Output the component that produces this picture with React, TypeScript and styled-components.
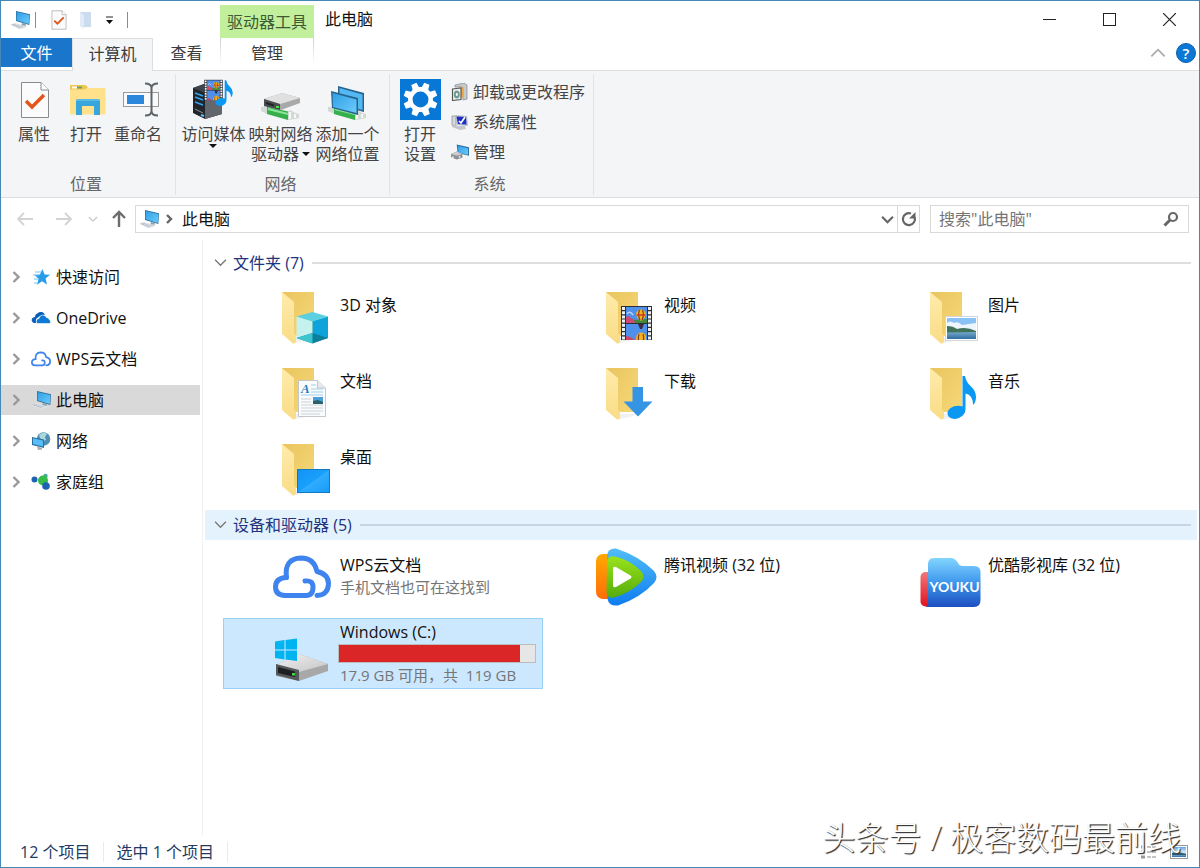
import React from 'react';
import styled, { createGlobalStyle } from 'styled-components';

const GlobalStyle = createGlobalStyle`
  *, *::before, *::after { box-sizing: border-box; }
  body {
    margin: 0;
    background: #fff;
    color: #111;
    font: 16px/20px "Open Sans", "Noto Sans CJK SC", sans-serif;
  }
  button, input { font: inherit; color: inherit; }
  button { border: 0; padding: 0; background: none; white-space: nowrap; }
  svg { display: block; flex: none; }
  h2, ul { margin: 0; padding: 0; font-weight: 400; font-size: 16px; list-style: none; }
`;

/* ---------- layout ---------- */

const Window = styled.div`
  position: relative;
  min-height: 100vh;
  display: flex;
  flex-direction: column;
  border: 1px solid #4488b8;
  background: #fff;
`;

const TitleBar = styled.header`
  display: flex;
  height: 37px;
`;

const QuickAccess = styled.div`
  width: 219px;
  padding: 0 0 0 9px;
  display: flex;
  align-items: center;
`;

const QuickButton = styled.button<{ $gap: number }>`
  margin-left: ${(p) => p.$gap}px;
`;

const QuickRule = styled.span<{ $gap: number }>`
  width: 1px;
  height: 16px;
  margin-left: ${(p) => p.$gap}px;
  background: #8c8c8c;
`;

const ContextTitle = styled.div`
  width: 94px;
  margin-top: 4px;
  padding-top: 7px;
  text-align: center;
  white-space: nowrap;
  background: #c2ef9b;
  color: #3d5a35;
`;

const WindowTitle = styled.div`
  flex: 1;
  padding: 8px 11px;
`;

const WindowButton = styled.button`
  width: 60px;
  display: grid;
  place-items: center;
`;

const TabRow = styled.nav`
  display: flex;
  height: 33px;
  border-bottom: 1px solid #dcdee0;
`;

const FileTab = styled.button`
  width: 71px;
  height: 29px;
  background: #1976ca;
  color: #fff;
`;

const Tab = styled.button<{ $width: number; $active?: boolean; $context?: boolean }>`
  width: ${(p) => p.$width}px;
  height: ${(p) => (p.$active ? 33 : 32)}px;
  padding-bottom: 2px;
  color: #3c3c3c;
  ${(p) => p.$active && `
    background: #f4f5f7;
    border: 1px solid #dcdee0;
    border-bottom: 0;
  `}
  ${(p) => p.$context && `
    background:
      linear-gradient(#ccc, #fff 26px) left / 1px 100% no-repeat,
      linear-gradient(#ccc, #fff 26px) right / 1px 100% no-repeat;
  `}
`;

const TabTools = styled.div`
  flex: 1;
  display: flex;
  justify-content: flex-end;
  align-items: center;
  gap: 10px;
  padding: 0 3px 2px 0;
`;

const HelpButton = styled.button`
  width: 20px;
  height: 20px;
  border-radius: 50%;
  border: 1px solid #0a5fae;
  background: #0a78d4;
  color: #fff;
  font-weight: 600;
  font-size: 15px;
  line-height: 16px;
`;

const Ribbon = styled.section`
  display: flex;
  padding: 3px 0 2px;
  background: #f4f5f7;
  border-bottom: 1px solid #dcdee0;
`;

const RibbonGroup = styled.div<{ $width: number; $pad: number }>`
  width: ${(p) => p.$width}px;
  padding: 5px 0 0 ${(p) => p.$pad}px;
  display: flex;
  flex-direction: column;
  border-right: 1px solid #e1e3e5;
`;

const RibbonItems = styled.div`
  display: flex;
  height: 95px;
`;

const GroupCaption = styled.div<{ $pad: number }>`
  margin: 0 4px 0 -${(p) => p.$pad}px;
  height: 21px;
  text-align: center;
  color: #666;
`;

const BigButton = styled.button<{ $width: number }>`
  width: ${(p) => p.$width}px;
  display: flex;
  flex-direction: column;
  align-items: center;
  gap: 3px;
  color: #444;
`;

const BigLabel = styled.span`
  display: block;
  text-align: center;
`;

const Caret = styled.i<{ $below?: boolean }>`
  display: ${(p) => (p.$below ? 'block' : 'inline-block')};
  width: 8px;
  margin: ${(p) => (p.$below ? '0 auto' : '0 0 4px 3px')};
  border: 4px solid transparent;
  border-top-color: #111;
  border-bottom: 0;
`;

const SmallList = styled.div`
  display: flex;
  flex-direction: column;
  margin: -2px 0 0 5px;
`;

const SmallButton = styled.button`
  height: 30px;
  display: flex;
  align-items: center;
  gap: 4px;
  color: #444;
`;

const AddressRow = styled.div`
  display: flex;
  align-items: center;
  height: 42px;
  padding: 0 10px 0 15px;
`;

const NavButton = styled.button<{ $width: number }>`
  width: ${(p) => p.$width}px;
  display: grid;
  justify-items: start;
`;

const AddressBox = styled.div`
  flex: 1;
  height: 28px;
  display: flex;
  align-items: center;
  border: 1px solid #d9d9d9;
  padding-left: 3px;
`;

const Crumb = styled.button`
  margin-left: 9px;
  flex: 1;
  text-align: left;
`;

const RefreshButton = styled.button`
  width: 22px;
  height: 26px;
  margin-left: 3px;
  display: grid;
  place-items: center;
  border-left: 1px solid #d9d9d9;
`;

const SearchBox = styled.label`
  width: 259px;
  height: 28px;
  margin-left: 10px;
  padding: 0 9px 0 8px;
  display: flex;
  align-items: center;
  border: 1px solid #d9d9d9;
`;

const SearchInput = styled.input`
  flex: 1;
  min-width: 0;
  border: 0;
  padding: 0;
  outline: 0;
  background: none;
  &::placeholder { color: #757575; opacity: 1; }
`;

const Body = styled.div`
  flex: 1;
  display: flex;
`;

const Sidebar = styled.nav`
  width: 202px;
  padding: 22px 2px 0 0;
  border-right: 1px solid #f0f0f0;
`;

const TreeList = styled.ul`
  display: flex;
  flex-direction: column;
  gap: 11px;
`;

const TreeButton = styled.button<{ $selected?: boolean }>`
  width: 100%;
  height: 30px;
  padding-left: 9px;
  display: flex;
  align-items: center;
  background: ${(p) => (p.$selected ? '#d9d9d9' : 'none')};
  > svg:first-child { margin-right: 9px; }
  > svg:nth-child(2) { margin-right: 5px; }
`;

const Main = styled.main`
  flex: 1;
  min-width: 0;
  padding: 8px 2px 0;
`;

const SectionHead = styled.button<{ $hot?: boolean }>`
  width: 100%;
  height: 30px;
  padding: 0 6px 1px 9px;
  display: flex;
  align-items: center;
  gap: 6px;
  color: #22347e;
  background: ${(p) => (p.$hot ? '#e4f2fd' : 'none')};
  &::after {
    content: '';
    flex: 1;
    height: 2px;
    margin-left: 2px;
    background: ${(p) => (p.$hot ? '#c5d5e3' : '#dedede')};
  }
`;

const Tiles = styled.div<{ $top: number }>`
  display: grid;
  grid-template-columns: repeat(auto-fill, 320px);
  gap: 5px 4px;
  padding: ${(p) => p.$top}px 0 3px 18px;
`;

const TileBox = styled.button<{ $selected?: boolean }>`
  height: 71px;
  padding: 2px 0 0 46px;
  display: flex;
  align-items: flex-start;
  gap: 5px;
  text-align: left;
  border: 1px solid ${(p) => (p.$selected ? '#99d1f5' : 'transparent')};
  background: ${(p) => (p.$selected ? '#cce8ff' : 'none')};
`;

const TileText = styled.span<{ $top: number }>`
  padding: ${(p) => p.$top}px 0 0 1px;
  line-height: 22px;
`;

const TileName = styled.span`
  display: block;
`;

const TileNote = styled.span`
  display: block;
  font-size: 15px;
  color: #757575;
`;

const Meter = styled.span`
  display: block;
  width: 198px;
  height: 19px;
  margin: 1px 0 1px -2px;
  border: 1px solid #bcbcbc;
  background: #e6e6e6;
`;

const MeterFill = styled.span`
  display: block;
  height: 100%;
  background: #da2626;
`;

const StatusBar = styled.footer`
  height: 32px;
  display: flex;
  align-items: center;
  padding: 1px 11px 0 19px;
  color: #1f3a63;
`;

const StatusText = styled.span`
  padding-right: 13px;
  margin-right: 12px;
  border-right: 1px solid #ebebeb;
`;

const ViewButton = styled.button<{ $push?: boolean }>`
  margin-left: ${(p) => (p.$push ? 'auto' : '13px')};
`;

const Watermark = styled.div`
  position: absolute;
  right: 18px;
  bottom: 7px;
  pointer-events: none;
  white-space: nowrap;
  color: #fff;
  font: 300 33px/44px "Open Sans", "Noto Sans CJK SC", sans-serif;
  text-shadow: 1px 1px 1px #333, 1px 1px 1px #666;
`;

/* ---------- icons ---------- */

const Gradients = () => (
  <svg width="0" height="0" style={{ position: 'absolute' }} aria-hidden="true">
    <defs>
      <linearGradient id="back" x1="0" y1="0" x2="1" y2="1">
        <stop offset="0" stopColor="#e9c55f" /><stop offset="1" stopColor="#f6d878" />
      </linearGradient>
      <linearGradient id="flap" x1="0" y1="0" x2="0" y2="1">
        <stop offset="0" stopColor="#ffebab" /><stop offset="1" stopColor="#f9dc86" />
      </linearGradient>
      <linearGradient id="screen" x1="0" y1="0" x2="1" y2="1">
        <stop offset="0" stopColor="#2f9fe6" /><stop offset="1" stopColor="#6ccbfb" />
      </linearGradient>
      <linearGradient id="desk" x1="0" y1="0" x2="1" y2="1">
        <stop offset="0" stopColor="#1492f6" /><stop offset=".5" stopColor="#18a0fc" />
        <stop offset=".51" stopColor="#30acff" /><stop offset="1" stopColor="#169bfa" />
      </linearGradient>
      <linearGradient id="metal" x1="0" y1="0" x2="1" y2="1">
        <stop offset="0" stopColor="#f2f2f2" /><stop offset="1" stopColor="#c4c4c4" />
      </linearGradient>
      <linearGradient id="sky" x1="0" y1="0" x2="0" y2="1">
        <stop offset="0" stopColor="#5aa5ee" /><stop offset=".5" stopColor="#d6ecfb" />
        <stop offset="1" stopColor="#2d6ea6" />
      </linearGradient>
      <linearGradient id="sea" x1="0" y1="0" x2="0" y2="1">
        <stop offset="0" stopColor="#7fb2d6" /><stop offset="1" stopColor="#2f6c9e" />
      </linearGradient>
      <linearGradient id="tvBlue" x1="0" y1="0" x2="0" y2="1">
        <stop offset="0" stopColor="#51bdf8" /><stop offset="1" stopColor="#0e7cf0" />
      </linearGradient>
      <linearGradient id="tvOrange" x1="0" y1="0" x2="0" y2="1">
        <stop offset="0" stopColor="#ffa800" /><stop offset="1" stopColor="#ff6d0a" />
      </linearGradient>
      <linearGradient id="tvGreen" x1="0" y1="0" x2="0" y2="1">
        <stop offset="0" stopColor="#9ae21c" /><stop offset="1" stopColor="#55ac0b" />
      </linearGradient>
      <linearGradient id="youku" x1="0" y1="0" x2="0" y2="1">
        <stop offset="0" stopColor="#82d5ff" /><stop offset=".5" stopColor="#3e97ec" />
        <stop offset="1" stopColor="#1d4fc0" />
      </linearGradient>
      <linearGradient id="youkuRed" x1="0" y1="0" x2="0" y2="1">
        <stop offset="0" stopColor="#f0787a" /><stop offset="1" stopColor="#e3121e" />
      </linearGradient>
    </defs>
  </svg>
);

const PcIcon = ({ size = 20 }: { size?: number }) => (
  <svg width={size} height={size} viewBox="0 0 60 60" aria-hidden="true">
    <path d="M36 39 48 43 46 49 34 47Z" fill="#8fa0af" />
    <path d="M18 3 60 13 58 45 18 33Z" fill="#2b6f9f" />
    <path d="M20 6 58 15 56 42 20 31Z" fill="url(#screen)" />
    <path d="M1 44 14 39 50 49 44 54 28 58Z" fill="#dce1e6" />
    <path d="M4 44 15 41 40 48 28 53Z" fill="#aab4bf" />
    <path d="M10 43 32 50M16 41 36 48M14 47 24 43M23 50 33 46" stroke="#edf0f3" strokeWidth="1.5" />
  </svg>
);

const PageCheck = () => (
  <>
    <path d="M11.500 3.500H31L38.500 11V38.500H11.500Z" fill="#fbfbfb" stroke="#8b8b8b" />
    <path d="M31 3.500V11H38.500" fill="#fff" stroke="#8b8b8b" />
    <path d="M16 22 22 28 34 16" fill="none" stroke="#e2551c" strokeWidth="3.500" />
  </>
);

const Big = ({ children }: { children: React.ReactNode }) => (
  <svg width="48" height="42" viewBox="0 0 48 42" aria-hidden="true">{children}</svg>
);

const Film = () => (
  <>
    <rect x="27" y="18" width="31" height="34" fill="#2b2f35" />
    <path d="M29.500 19V52M55.500 19V52" stroke="#eef1f3" strokeWidth="3" strokeDasharray="3 1.200" />
    <rect x="32" y="19" width="21" height="16" fill="#4f90ea" />
    <rect x="32" y="36" width="21" height="16" fill="#4f90ea" />
    <path d="M32 31Q37 29 41 32L53 31V35H32Z" fill="#3f8a3a" />
    <path d="M32 29 34 28 40 32 41 35H32Z" fill="#cf4a72" />
    <path d="M33 26Q36 22 39 27" fill="none" stroke="#b9d3f6" strokeWidth="1.500" />
    <path d="M47 21.500A5 5 0 0 1 52 26.500Q51.500 29.500 48 32.500H46Q42.500 29.500 42 26.500A5 5 0 0 1 47 21.500Z" fill="#f2b321" />
    <path d="M45.500 22Q43.500 27 46 32M48.500 22Q50.500 27 48 32" fill="none" stroke="#8a3a18" strokeWidth="1.200" />
    <path d="M42.500 27H51.500" stroke="#c9361f" strokeWidth="1.400" />
    <path d="M44 36H50L48 41H46Z" fill="#3d2a3c" />
    <path d="M42 52Q41.500 45 47 44.500T52 52Z" fill="#f2b321" />
    <path d="M45 46Q44 49 44.500 52M49 46Q50 49 49.500 52" fill="none" stroke="#8a3a18" strokeWidth="1.200" />
    <path d="M32 48 36 49 41 52H32Z" fill="#cf4468" />
  </>
);

const Note = () => (
  <path
    d="M44.500 12H47Q48 18 53 22.500Q58 27 58 33Q58 38 55 41Q55 31 47.500 29.500V45Q47.500 51 41 54Q34 56.500 30.500 52.500Q27.500 48 32.500 44Q38 40.500 44.500 42.500Z"
    fill="#0b98f3"
  />
);

const NetPipe = () => (
  <>
    <path d="M4 28 11 27.500 31 32 33 31 37 33 38 34 42 35V39L38 40 32 41 10 35 4 32Z" fill="#d3dad5" />
    <path d="M10 28 31 32.500V41L10 35Z" fill="#35b04b" />
    <path d="M11 30 31 35" stroke="#8be39a" strokeWidth="2" />
    <path d="M33 33V40M38 35V39" stroke="#f4f8f4" strokeWidth="2" fill="none" />
  </>
);

const PropertiesIcon = () => <Big><PageCheck /></Big>;

const OpenIcon = () => (
  <Big>
    <path d="M8 7Q8 6 9 6H23L26 9H42Q43.500 9 43.500 10V34Q43.500 35.500 42 35.500H9.500Q8 35.500 8 34Z" fill="#ffe08b" />
    <path d="M8 7Q8 6 9 6H23L26 8 23 10.500H8Z" fill="#edc64e" />
    <path d="M10 8.500H15" stroke="#fff" strokeWidth="2" />
    <path d="M15 7.500H20V9.500H15Z" fill="#6fa05d" />
    <path d="M14 36V22Q14 20 16 20H36Q38 20 38 22V36H32V27H20V36Z" fill="#36a6dd" />
    <path d="M15 22Q15 21 16 21H36Q37 21 37 22" fill="none" stroke="#7ccdf0" />
  </Big>
);

const RenameIcon = () => (
  <Big>
    <rect x="9.500" y="13.500" width="35" height="14" fill="#fafafa" stroke="#9a9a9a" />
    <rect x="13" y="16" width="17" height="9" fill="#2a87dc" />
    <path d="M31 4.500Q37.500 4.500 37.500 9V32Q37.500 36.500 31 36.500M44 4.500Q37.500 4.500 37.500 9M37.500 32Q37.500 36.500 44 36.500" fill="none" stroke="#5f6468" strokeWidth="2" />
  </Big>
);

const MediaIcon = () => (
  <Big>
    <path d="M3 9 14 5 32 10V35L15 40 3 34Z" fill="#22262b" />
    <path d="M15 14 32 10V35L15 40Z" fill="#62676e" />
    <path d="M3 9 14 5 32 10 15 14Z" fill="#3e444b" />
    <path d="M5 14 13 17M5 18 13 21M5 23 13 26" stroke="#31a6f0" strokeWidth="1.500" />
    <path d="M5 30 13 34" stroke="#8c939a" />
    <path d="M11 36 14 37" stroke="#4ec6ff" strokeWidth="2" />
    <g transform="translate(-2 -10) scale(.6)"><Film /></g>
    <g transform="translate(8 -6) scale(.6)"><Note /></g>
  </Big>
);

const MapDriveIcon = () => (
  <Big>
    <NetPipe />
    <path d="M7 20 25 14 43 19V24L24 31 7 27Z" fill="#a9a9a9" />
    <path d="M7 20 25 14 43 19 23 25Z" fill="#e0e0e0" />
    <path d="M7 20 23 25V31L7 27Z" fill="#4a4d50" />
    <path d="M9 23 17 25.500V27.500L9 25Z" fill="#202224" />
    <rect x="19" y="27" width="3" height="2" fill="#4be04f" />
  </Big>
);

const AddPlaceIcon = () => (
  <Big>
    <path d="M14 7 40 14V33L14 26Z" fill="#26648f" />
    <path d="M15.500 9 38.500 15.500V31L15.500 25Z" fill="#54b9f2" />
    <NetPipe />
    <path d="M7 12 34 19V36L8 29Z" fill="#26648f" />
    <path d="M8.500 14 32.500 20.500V34L9 28Z" fill="url(#screen)" />
  </Big>
);

const SettingsIcon = () => (
  <svg width="41" height="42" viewBox="0 0 41 42" aria-hidden="true">
    <rect width="41" height="41" fill="#0878d7" />
    <g transform="translate(20.500 20.500)">
      {[0, 45, 90, 135, 180, 225, 270, 315].map((a) => (
        <path key={a} d="M-3.600-11-2.800-17H2.800L3.600-11Z" fill="#fff" transform={`rotate(${a + 22})`} />
      ))}
      <circle r="10.200" fill="none" stroke="#fff" strokeWidth="4.500" />
    </g>
  </svg>
);

const UninstallIcon = () => (
  <svg width="18" height="18" viewBox="0 0 18 18" aria-hidden="true">
    <path d="M4 2 13 0 16 2V16L12 17 11 4 4 4Z" fill="#c7c9cb" stroke="#85888b" strokeWidth=".7" />
    <path d="M9 5 13 4V14L9 15Z" fill="#f0a848" />
    <path d="M1.500 6 10 5V16.500L1.500 17.500Z" fill="#f1f1f1" stroke="#55585b" strokeWidth="1.200" />
    <ellipse cx="5.800" cy="11.500" rx="3" ry="4" fill="#6e9c8f" />
    <ellipse cx="5.800" cy="11.500" rx="1" ry="1.400" fill="#fff" />
  </svg>
);

const SysPropsIcon = () => (
  <svg width="18" height="18" viewBox="0 0 18 18" aria-hidden="true">
    <path d="M1 3H5V14L1 12Z" fill="#d5d8dc" stroke="#777" strokeWidth=".6" />
    <path d="M4 2 16 3 17 13 6 12Z" fill="#b9c0cc" />
    <path d="M5.500 3.500 15 4 15.500 11.500 7 11Z" fill="#1d2fc0" />
    <path d="M8 8 10 10 14 4" fill="none" stroke="#fff" strokeWidth="1.700" />
    <path d="M8 13H14L15 16 9 17 1 14V13Z" fill="#c3c7cc" />
  </svg>
);

const ManageIcon = () => (
  <svg width="18" height="18" viewBox="0 0 19 18" aria-hidden="true">
    <path d="M6 1 19 4V13L7 10Z" fill="#2b6f9f" />
    <path d="M7 2.300 18 5V12L8 9.500Z" fill="url(#screen)" />
    <path d="M0 11 6 8.500 12 11V15L6 17 0 14.500Z" fill="#8d9093" />
    <path d="M0 11 6 8.500 12 11 6 13Z" fill="#c9cccf" />
    <path d="M2 13.500V15.500M9 13V15" stroke="#eee" strokeWidth="1.500" />
  </svg>
);

const ArrowIcon = ({ dir }: { dir: 'left' | 'right' | 'up' }) => {
  const angle = { left: 0, up: 90, right: 180 }[dir];
  return (
    <svg width="18" height="18" viewBox="0 0 18 18" aria-hidden="true">
      <path
        d="M8 3 2 9 8 15M2 9H17"
        fill="none"
        stroke={dir === 'up' ? '#6c6c6c' : '#d3d3d3'}
        strokeWidth={dir === 'up' ? 2.4 : 1.8}
        transform={`rotate(${angle} 9 9)`}
      />
    </svg>
  );
};

const Chevron = ({ dir, w = 12, color = '#777', weight = 2 }: { dir: 'right' | 'down' | 'up'; w?: number; color?: string; weight?: number }) => {
  const angle = { right: 0, down: 90, up: -90 }[dir];
  return (
    <svg width={w} height={w} viewBox="0 0 12 12" aria-hidden="true">
      <path d="M3.500 1 8.500 6 3.500 11" fill="none" stroke={color} strokeWidth={weight} transform={`rotate(${angle} 6 6)`} />
    </svg>
  );
};

const StarIcon = () => (
  <svg width="20" height="20" viewBox="0 0 20 20" aria-hidden="true">
    <path d="M11.500 2 13.500 7.500 19 7.800 14.600 11.500 16 17.500 11 14.200 6 17.800 7.600 11.800 3.500 8 9 7.500Z" fill="#279de8" />
    <path d="M4 5H10M2 8H8M3 12H8M3 16H6" stroke="#73c5f5" />
  </svg>
);

const OneDriveIcon = () => (
  <svg width="20" height="20" viewBox="0 0 20 20" aria-hidden="true">
    <path d="M1.500 14Q0 12.500 1 10.500 2 9 4 9 4 6 7 5 8 3.500 11 4 13 4.500 14 6.500L9 8 5 11V15H3Q2 15 1.500 14Z" fill="#0a5fb8" />
    <path d="M6 15.500Q4.500 14 5.500 12 6.300 10.800 8 10.500 8.500 7.500 11.500 7 14.500 7 15.500 9.500 18 9.500 18.500 12 20 12.500 19.500 14.500 19 15.500 18 15.500Z" fill="#0f79d6" stroke="#fff" strokeWidth=".6" />
  </svg>
);

const WpsCloud = ({ size, weight, crop = '0 0 64 64' }: { size: number; weight: number; crop?: string }) => (
  <svg width={size} height={size} viewBox={crop} aria-hidden="true">
    <path
      d="M35 36Q43 35 43 42Q43 50.500 36 50.500H15Q5.500 50 5.500 42Q5.500 33 16.500 32.500Q14 13.500 31 13Q44 13 47 26.500Q58.500 29 58.500 39Q58 50 47 50.500"
      fill="none"
      stroke="#3f83ee"
      strokeWidth={weight}
      strokeLinecap="round"
      strokeLinejoin="round"
    />
  </svg>
);

const NetworkIcon = () => (
  <svg width="20" height="20" viewBox="0 0 20 20" aria-hidden="true">
    <circle cx="12.500" cy="8" r="6.800" fill="#4f8fb3" />
    <path d="M8 4Q12 0 16 3L14 6 15 9 12 10 9 7Z" fill="#a9d9dd" />
    <path d="M1 6 13 8.500V17L1 14Z" fill="#2b6f9f" />
    <path d="M2 7.300 12 9.500V15.500L2 13Z" fill="#58bdf7" />
    <path d="M6 15.500 11 17V18.500L7 19Z" fill="#a4adb5" />
  </svg>
);

const HomegroupIcon = () => (
  <svg width="20" height="20" viewBox="0 0 20 20" aria-hidden="true">
    <circle cx="3.500" cy="7.500" r="3" fill="#1e62b4" />
    <circle cx="14.500" cy="4" r="2.200" fill="#4aa7a2" />
    <circle cx="12" cy="8.500" r="5" fill="#36bc4a" />
    <circle cx="15" cy="14" r="3.800" fill="#1e62b4" />
  </svg>
);

const Tile64 = ({ children }: { children: React.ReactNode }) => (
  <svg width="64" height="66" viewBox="0 -1 64 66" aria-hidden="true">{children}</svg>
);

const Folder = ({ children }: { children?: React.ReactNode }) => (
  <Tile64>
    <path d="M24 50H44L36 53 26 55Z" fill="#f1f1f1" />
    <path d="M12 4H44V48H24L12 40Z" fill="url(#back)" />
    <path d="M12 4 24 14V46L26 47V54Q25 56 23 55.500L12 46Z" fill="url(#flap)" />
    {children}
  </Tile64>
);

const icons = {
  cube: (
    <Folder>
      <path d="M26.500 28.500 42.500 33V55L26.500 50Z" fill="#c5f1ef" />
      <path d="M58 28.500 42.500 33V55L58 50Z" fill="#0fa3dc" />
      <path d="M42.500 24 58 28.500 42.500 33.500 26.500 28.500Z" fill="#5ccfe0" />
      <path d="M42.500 45 58 50 42.500 55.500 26.500 50Z" fill="#0b7f9b" />
      <path d="M42.500 45V55.500L26.500 50Z" fill="#3cc4cf" />
    </Folder>
  ),
  video: <Folder><Film /></Folder>,
  picture: (
    <Folder>
      <rect x="27.500" y="28.500" width="32" height="24" fill="#fff" stroke="#d2d6da" />
      <rect x="29" y="30" width="29" height="14" fill="#8bc2f5" />
      <path d="M29 35Q32 32 36 35Q40 33 44 37L58 35V43H29Z" fill="#eef6fd" />
      <rect x="29" y="43" width="29" height="8" fill="url(#sea)" />
      <path d="M29 38Q35 38 39 41Q48 38 58 43V44L29 44.500Z" fill="#41735a" />
    </Folder>
  ),
  doc: (
    <Folder>
      <path d="M28.500 16.500H47.500L55.500 24V52.500H28.500Z" fill="#fafbfc" stroke="#c3c7cb" />
      <path d="M47.500 16.500V24H55.500" fill="#e7eaed" stroke="#c3c7cb" />
      <text x="31" y="29" fontFamily="Liberation Serif, serif" fontStyle="italic" fontWeight="700" fontSize="13" fill="#2a7fb8">A</text>
      <path d="M41 21H46M41 25H53M41 28H53M31 31H53" stroke="#9fcfe8" />
      <path d="M31 35H41M31 38H41M31 41H53M31 44H53M31 47H53M31 50H50" stroke="#ccd1d6" />
      <rect x="43" y="33" width="10" height="7" fill="#4a9fd8" />
      <path d="M43 37 48 36 53 38V40H43Z" fill="#2c5f6a" />
    </Folder>
  ),
  download: (
    <Folder>
      <path d="M38.500 23H49V37.500H58.500L44 52.500 29.500 37.500H38.500Z" fill="#3594e4" />
    </Folder>
  ),
  music: <Folder><Note /></Folder>,
  desktop: (
    <Folder>
      <rect x="27.500" y="29.500" width="32" height="23" fill="url(#desk)" stroke="#1279c4" />
    </Folder>
  ),
  tencent: (
    <Tile64>
      <rect x="2" y="8" width="18" height="45" rx="7" fill="url(#tvOrange)" />
      <path d="M13 9Q14 2 22 2.500 45 10 60 25 65 31 60 37 46 52 24 59.500 15 60.500 13.500 53Z" fill="url(#tvBlue)" />
      <path d="M13 15Q14 9 21 10.500 36 14 47 25 52 31 47 36 36 47 20 51.500 13 53 12.500 46Z" fill="url(#tvGreen)" />
      <path d="M19 22.500Q19 20 22 21L36.500 29.500Q38.500 31 36.500 32.500L22 41Q19 42 19 39.500Z" fill="#fff" />
    </Tile64>
  ),
  youku: (
    <Tile64>
      <rect x="2.500" y="26" width="20" height="34.500" rx="5" fill="url(#youkuRed)" />
      <path d="M10 18Q10 12 16 12H33Q37 12 40 17 41 20 45 20H56Q62.500 20 62.500 26V54Q62.500 61 56 61H8Q10 59 10 55Z" fill="url(#youku)" />
      <text x="36.500" y="46" textAnchor="middle" style={{ fontFamily: 'Lato, sans-serif' }} fontWeight="700" fontSize="14" fill="#fff">YOUKU</text>
    </Tile64>
  ),
  drive: (
    <Tile64>
      <path d="M6 43 29 32 58 42V49L29 59 6 54Z" fill="#a8a8a8" />
      <path d="M6 43 29 32 58 42 29 50Z" fill="url(#metal)" />
      <path d="M6 42 29 48V59L6 53Z" fill="#55585a" />
      <path d="M8 45 25 49.500V55L8 51Z" fill="#1d1f20" />
      <rect x="22" y="51" width="3" height="2.500" fill="#46d84b" />
      <path d="M5 19.500 14.500 18V27.500H5ZM15.500 18 27 16.500V27.500H15.500ZM5 28.500H14.500V37.500L5 36ZM15.500 28.500H27V39L15.500 37.500Z" fill="#00b4f1" />
    </Tile64>
  ),
};

/* ---------- data ---------- */

const folders: [string, React.ReactNode][] = [
  ['3D 对象', icons.cube],
  ['视频', icons.video],
  ['图片', icons.picture],
  ['文档', icons.doc],
  ['下载', icons.download],
  ['音乐', icons.music],
  ['桌面', icons.desktop],
];

const tree: [string, React.ReactNode][] = [
  ['快速访问', <StarIcon />],
  ['OneDrive', <OneDriveIcon />],
  ['WPS云文档', <WpsCloud size={20} weight={5} crop="3 3 58 58" />],
  ['此电脑', <PcIcon />],
  ['网络', <NetworkIcon />],
  ['家庭组', <HomegroupIcon />],
];

const used = 0.925;

export default function App() {
  return (
    <Window>
      <GlobalStyle />
      <Gradients />

      <TitleBar>
        <QuickAccess>
          <PcIcon />
          <QuickRule $gap={5} />
          <QuickButton $gap={15} aria-label="属性">
            <svg width="16" height="20" viewBox="10 2 30 38" aria-hidden="true"><PageCheck /></svg>
          </QuickButton>
          <QuickButton $gap={12} aria-label="新建文件夹">
            <svg width="13" height="18" viewBox="0 0 13 18" aria-hidden="true">
              <path d="M1 1H12V16H5L1 14Z" fill="#cbdcee" />
              <path d="M1 1 5 4V18L1 15Z" fill="#e0ebf7" />
            </svg>
          </QuickButton>
          <QuickButton $gap={13} aria-label="自定义快速访问工具栏">
            <svg width="9" height="8" viewBox="0 0 9 8" aria-hidden="true">
              <path d="M1 1H8" stroke="#222" />
              <path d="M1 4H8L4.500 8Z" fill="#111" />
            </svg>
          </QuickButton>
          <QuickRule $gap={13} />
        </QuickAccess>
        <ContextTitle>驱动器工具</ContextTitle>
        <WindowTitle>此电脑</WindowTitle>
        <WindowButton aria-label="最小化">
          <svg width="13" height="13"><path d="M0 6.500H13" stroke="#222" /></svg>
        </WindowButton>
        <WindowButton aria-label="最大化">
          <svg width="13" height="13"><rect x=".5" y=".5" width="12" height="12" fill="none" stroke="#222" /></svg>
        </WindowButton>
        <WindowButton aria-label="关闭">
          <svg width="13" height="13"><path d="M0 0 13 13M13 0 0 13" stroke="#222" strokeWidth="1.200" /></svg>
        </WindowButton>
      </TitleBar>

      <TabRow>
        <FileTab>文件</FileTab>
        <Tab $width={81} $active>计算机</Tab>
        <Tab $width={67}>查看</Tab>
        <Tab $width={94} $context>管理</Tab>
        <TabTools>
          <button aria-label="折叠功能区"><Chevron dir="up" w={16} color="#aaa" weight={1.3} /></button>
          <HelpButton aria-label="帮助">?</HelpButton>
        </TabTools>
      </TabRow>

      <Ribbon>
        <RibbonGroup $width={175} $pad={7}>
          <RibbonItems>
            <BigButton $width={52}><PropertiesIcon /><BigLabel>属性</BigLabel></BigButton>
            <BigButton $width={52}><OpenIcon /><BigLabel>打开</BigLabel></BigButton>
            <BigButton $width={52}><RenameIcon /><BigLabel>重命名</BigLabel></BigButton>
          </RibbonItems>
          <GroupCaption $pad={7}>位置</GroupCaption>
        </RibbonGroup>
        <RibbonGroup $width={214} $pad={4}>
          <RibbonItems>
            <BigButton $width={67}><MediaIcon /><BigLabel>访问媒体<Caret $below /></BigLabel></BigButton>
            <BigButton $width={67}><MapDriveIcon /><BigLabel>映射网络<br />驱动器<Caret /></BigLabel></BigButton>
            <BigButton $width={67}><AddPlaceIcon /><BigLabel>添加一个<br />网络位置</BigLabel></BigButton>
          </RibbonItems>
          <GroupCaption $pad={4}>网络</GroupCaption>
        </RibbonGroup>
        <RibbonGroup $width={204} $pad={4}>
          <RibbonItems>
            <BigButton $width={52}><SettingsIcon /><BigLabel>打开<br />设置</BigLabel></BigButton>
            <SmallList>
              <SmallButton><UninstallIcon />卸载或更改程序</SmallButton>
              <SmallButton><SysPropsIcon />系统属性</SmallButton>
              <SmallButton><ManageIcon />管理</SmallButton>
            </SmallList>
          </RibbonItems>
          <GroupCaption $pad={4}>系统</GroupCaption>
        </RibbonGroup>
      </Ribbon>

      <AddressRow>
        <NavButton $width={39} aria-label="后退"><ArrowIcon dir="left" /></NavButton>
        <NavButton $width={33} aria-label="前进"><ArrowIcon dir="right" /></NavButton>
        <NavButton $width={22} aria-label="最近位置"><Chevron dir="down" w={10} color="#ccc" weight={1.6} /></NavButton>
        <NavButton $width={25} aria-label="向上"><ArrowIcon dir="up" /></NavButton>
        <AddressBox>
          <PcIcon />
          <svg width="14" height="12" viewBox="-4 0 14 12" aria-hidden="true"><path d="M4 2 8 6 4 10" fill="none" stroke="#666" strokeWidth="2.400" /></svg>
          <Crumb>此电脑</Crumb>
          <button aria-label="以前的位置"><Chevron dir="down" w={13} color="#666" /></button>
          <RefreshButton aria-label="刷新">
            <svg width="16" height="16" viewBox="0 0 16 16" aria-hidden="true">
              <path d="M13.500 6A6 6 0 1 1 10 2.500" fill="none" stroke="#666" strokeWidth="2.200" />
              <path d="M14.500 1V7.500H8L10.500 5Z" fill="#666" />
            </svg>
          </RefreshButton>
        </AddressBox>
        <SearchBox>
          <SearchInput type="text" placeholder={'搜索"此电脑"'} aria-label="搜索" />
          <svg width="16" height="16" viewBox="0 0 16 16" aria-hidden="true">
            <circle cx="10" cy="6" r="4" fill="none" stroke="#666" strokeWidth="2.200" />
            <path d="M7 9 1.500 14.500" stroke="#666" strokeWidth="3" />
          </svg>
        </SearchBox>
      </AddressRow>

      <Body>
        <Sidebar>
          <TreeList>
            {tree.map(([name, icon]) => (
              <li key={name}>
                <TreeButton $selected={name === '此电脑'}>
                  <Chevron dir="right" color="#999" weight={2.4} />
                  {icon}
                  {name}
                </TreeButton>
              </li>
            ))}
          </TreeList>
        </Sidebar>

        <Main>
          <h2>
            <SectionHead><Chevron dir="down" w={13} weight={1.2} />文件夹 (7)</SectionHead>
          </h2>
          <Tiles $top={6}>
            {folders.map(([name, icon]) => (
              <TileBox key={name}>
                {icon}
                <TileText $top={7}><TileName>{name}</TileName></TileText>
              </TileBox>
            ))}
          </Tiles>

          <h2>
            <SectionHead $hot><Chevron dir="down" w={13} weight={1.2} />设备和驱动器 (5)</SectionHead>
          </h2>
          <Tiles $top={2}>
            <TileBox>
              <WpsCloud size={64} weight={5} />
              <TileText $top={9}>
                <TileName>WPS云文档</TileName>
                <TileNote>手机文档也可在这找到</TileNote>
              </TileText>
            </TileBox>
            <TileBox>
              {icons.tencent}
              <TileText $top={9}><TileName>腾讯视频 (32 位)</TileName></TileText>
            </TileBox>
            <TileBox>
              {icons.youku}
              <TileText $top={9}><TileName>优酷影视库 (32 位)</TileName></TileText>
            </TileBox>
            <TileBox $selected>
              {icons.drive}
              <TileText $top={0}>
                <TileName>Windows (C:)</TileName>
                <Meter><MeterFill style={{ width: `${used * 100}%` }} /></Meter>
                <TileNote>17.9 GB 可用，共{'\u00a0\u00a0'}119 GB</TileNote>
              </TileText>
            </TileBox>
          </Tiles>
        </Main>
      </Body>

      <StatusBar>
        <StatusText>12 个项目</StatusText>
        <StatusText>选中 1 个项目</StatusText>
        <ViewButton $push aria-label="详细信息">
          <svg width="17" height="14" viewBox="0 0 17 14" aria-hidden="true">
            <path d="M1 2H5M1 7H5M1 12H5" stroke="#999" strokeWidth="3" />
            <path d="M7 2H16M7 7H16M7 12H16" stroke="#888" strokeDasharray="4 1" />
          </svg>
        </ViewButton>
        <ViewButton aria-label="大图标">
          <svg width="18" height="14" viewBox="0 0 18 14" aria-hidden="true">
            <rect x=".5" y=".5" width="17" height="13" fill="#fff" stroke="#999" />
            <rect x="2" y="2" width="14" height="10" fill="url(#sky)" />
            <path d="M2 8Q8 6 16 9V10H2Z" fill="#2f5d73" />
          </svg>
        </ViewButton>
      </StatusBar>
      <Watermark>头条号 / 极客数码最前线</Watermark>
    </Window>
  );
}
